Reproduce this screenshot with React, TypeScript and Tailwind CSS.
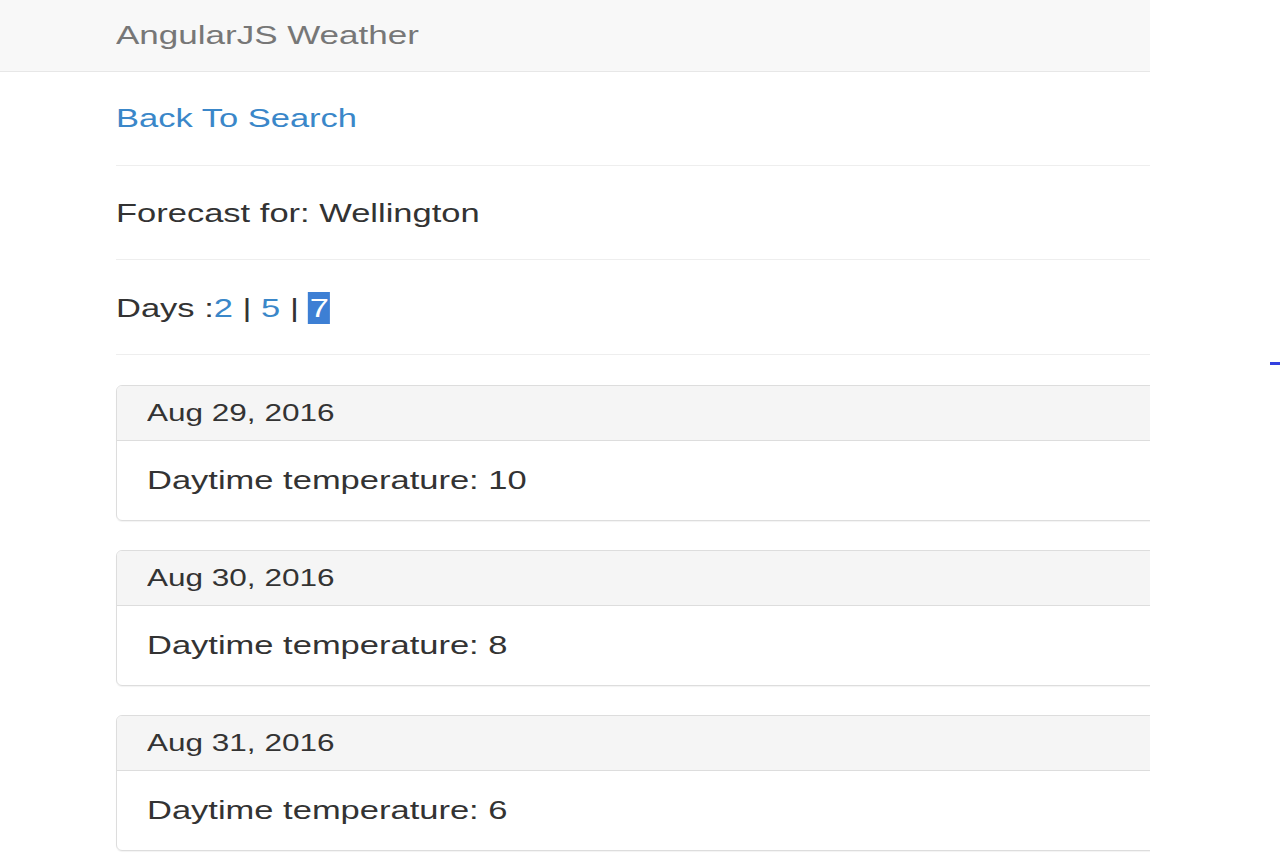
import React from 'react';

const forecast = [
    { date: "Aug 29, 2016", temp: 10 },
    { date: "Aug 30, 2016", temp: 8 },
    { date: "Aug 31, 2016", temp: 6 },
];

// the reference is stretched sideways, so every line of text gets a horizontal scale
const Wide = ({ children, className = "" }: { children: React.ReactNode; className?: string }) => (
    <span className={"inline-block origin-left whitespace-nowrap " + className}>{children}</span>
);

export default function App() {
    return (
        <div className="flex min-h-screen bg-white font-['Liberation_Sans',Arial,sans-serif] text-[#333]">
            <div className="w-[1150px] shrink-0 overflow-hidden">
                {/* Navbar */}
                <div className="h-[72px] border-b border-[#e7e7e7] bg-[#f8f8f8] pl-[116px] flex items-center">
                    <Wide className="scale-x-[1.4] text-[25px] leading-none text-[#777]">AngularJS Weather</Wide>
                </div>

                <div className="pl-[116px] w-[1250px]">
                    <div className="h-[94px] border-b border-[#eee] flex items-center">
                        <Wide className="scale-x-[1.38] text-[25px] leading-none text-[#3a87c9]">Back To Search</Wide>
                    </div>
                    <div className="h-[94px] border-b border-[#eee] flex items-center pt-[1px]">
                        <Wide className="scale-x-[1.38] text-[25px] leading-none">Forecast for: Wellington</Wide>
                    </div>
                    <div className="h-[95px] border-b border-[#eee] flex items-center pt-[3px]">
                        <Wide className="scale-x-[1.38] text-[25px] leading-none">
                            Days :<span className="text-[#3a87c9]">2</span> | <span className="text-[#3a87c9]">5</span> |{" "}
                            <span className="bg-[#3d7fd4] text-white px-[1px] py-[2px]">7</span>
                        </Wide>
                    </div>

                    {/* Forecast panels */}
                    <div className="pt-[30px]">
                        {forecast.map((day, i) => (
                            <div key={i} className="w-[1100px] mb-[29px] border border-[#ddd] rounded-[6px] overflow-hidden shadow-[0_1px_1px_rgba(0,0,0,0.05)]">
                                <div className="h-[55px] bg-[#f5f5f5] border-b border-[#ddd] pl-[30px] flex items-center">
                                    <Wide className="scale-x-[1.37] text-[23px] leading-none">{day.date}</Wide>
                                </div>
                                <div className="h-[79px] pl-[30px] flex items-center">
                                    <Wide className="scale-x-[1.38] text-[25px] leading-none">Daytime temperature: {day.temp}</Wide>
                                </div>
                            </div>
                        ))}
                    </div>
                </div>
            </div>

            <div className="flex-1 flex justify-end">
                <div className="mt-[362px] w-[10px] h-[3px] bg-[#3340e0]" />
            </div>
        </div>
    );
}
